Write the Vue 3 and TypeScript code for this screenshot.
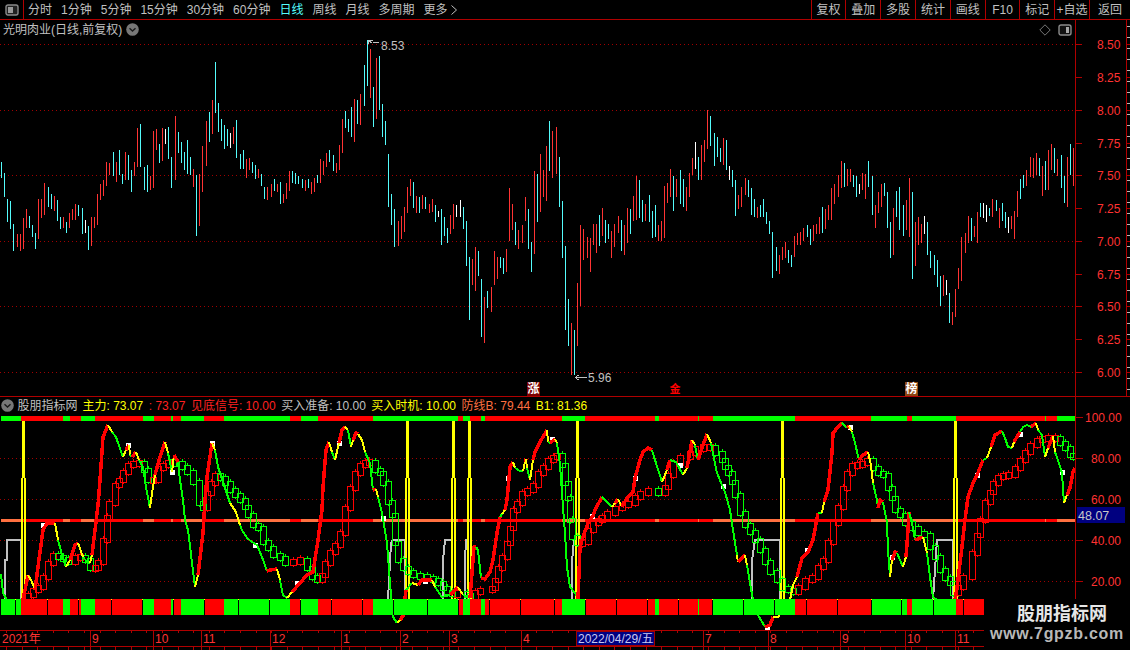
<script setup lang="ts">
type Seg = { c: string; pts: string }
const RED = '#ff3333', CYAN = '#54fcfc', WHITE = '#ffffff'

const candleSections: [number, number, string][] = [
  [0, 40, '5c366-414 13c399-471 22c477-546 31c483-567 40c552-633 52r582-621 61r582-633 70r534-627 79r507-564 88c528-564 97c555-591 106c579-627 115r477-597 124r477-534 133r429-525 145c441-501 154c462-507 163r468-513 172c480-543 181c531-567 190r531-564 199c546-579 208r519-564 217r507-540 226r492-540 235c495-528 247c504-582 256w540-579 265c558-630 274r531-618 283r531-564 292r462-555 301r432-480 310r420-468 319r366-438 328r369-405 340c336-408 349r366-426 358c330-405 367c402-432 376r336-420 385c345-420 394c390-456 403r366-408 412r264-381 421c252-381 433c381-450 442c375-456 451r408-450 460r273-444 469r267-330 478c312-369 487r264-363 496w267-312 505c261-357 514c351-444 526r228-420 535c276-339 544c306-369 553c336-390 562c300-402 571c351-405 580r387-441 589c405-588 598r402-558 607r318-456 619r243-378 628c216-306 637r180-282 646c66-219 655c189-276 664c237-303 673c255-327 682c267-318 691w279-324 700r261-312 709c240-354 721c342-387 730c330-387 739r357-414 748r354-390 757c366-399 766c375-417 775r387-414 784c402-438 793c441-477 802r441-480 814r432-471 823c417-453 832r432-456 841c426-492 850r462-489 859r429-477 868r393-453 877c393-429 886c399-432 895c408-432 907c417-444 916r420-453 925c417-444 934r426-462 943r414-456 952c405-429 961r357-429 970r363-405 979r339-381 988c330-366 999c345-393 1009r369-399 1018r315-390 1027r237-339 1036c213-264 1045c237-276 1054c201-291 1063r177-306 1072c180-252 1081r162-255 1093c75-198 1102c0-138 1111r27-174 1120c141-261 1129r54-237 1138c48-210 1147c192-291 1156c243-315 1165c342-501 1174c462-555 1183c507-621 1195r543-618'],
  [400, 100, '4r348-417 13r321-396 22r261-339 31r237-288 40c246-324 49r288-339 58c291-339 67r285-327 76c291-327 88r312-339 97r297-336 106c315-366 115w333-351 124c327-435 133c351-408 142c384-429 151r345-402 160r312-387 169w315-351 181w300-351 190c321-387 199c363-498 208c471-660 217r477-555 226r441-573 235c453-528 244c537-711 253r591-729 262c573-624 274r561-636 283r453-555 292r471-537 301c471-504 310c474-522 319r447-516 328r264-423 337r312-390 346c366-435 355r390-447 367r375-429 376r291-363 385c327-447 394c426-516 403r213-462 412c222-366 421r162-336 430r210-291 439r138-303 448c63-213 457r93-234 469r81-222 478c171-321 487c303-474 496c438-690 505c597-738 514r669-825 523c690-825 532r549-738 541r375-618 550r387-480 562r411-474 571r414-516 580r372-435 589r372-459 598c345-438 607r324-408 616c360-429 625c372-417 634r393-474 643r372-441 655r348-399 664c360-453 673r375-465 682r324-429 691c327-402 700r288-363 709r228-360 718c240-354 727c300-366 736r312-363 748c285-366 757c333-414 766c315-411 775r375-423 784r363-423 793r258-414 802r249-309 811r207-291 820c228-333 829r237-291 841c210-312 850c237-321 859r261-333 868r219-291 877r174-225 886w126-207 895c171-240 904r135-240 913r120-186 922r30-147 931c48-138 943c99-198 952c111-171 961c144-186 970r114-195 979c120-210 988w198-240 997c210-261 1006c240-348 1015r285-327 1024r261-321 1036r234-285 1045c240-291'],
  [750, 100, '4c264-345 13c297-351 22r321-354 31c315-351 40c297-351 49c336-372 58c363-402 67c396-534 79c441-513 88r465-522 97r441-480 106r426-474 115c450-489 124c465-501 133r408-471 142r399-435 151r396-435 160r384-423 172c375-411 181c387-435 190r375-423 199r372-402 208r351-402 217c321-399 226r327-387 235r315-360 244r264-360 253r252-312 265r225-291 274r183-264 283c189-261 292r207-258 301r207-246 310c225-261 319c228-291 328w252-282 337r219-270 346r222-297 355c183-261 367c228-345 376r315-384 385r276-339 394r252-321 403c249-288 412c276-384 421c366-474 430r324-465 439c273-351 448c261-390 460c315-408 469r300-390 478r234-411 487c276-537 496r366-498 505r351-435 514r372-429 523w348-402 532c366-465 541c453-504 553c465-525 562c480-561 571c528-618 580r525-588 589w540-585 598c579-669 607r636-675 616r567-651 625r504-567 634r411-543 646r399-459 655r348-429 664c354-423 673r378-411 682r336-429 691c309-351 700w309-354 709w315-366 718c324-348 727r297-351 739c300-333 748r324-384 757c309-363 766c336-384 775w351-399 784r348-387 793r333-417 802r273-351 811c237-297 820c225-264 829r210-258 841r171-231 850r174-234 859r159-225 868c174-228 877r198-288 886c183-270 895r150-270 904r132-210 913c144-219 922r177-228 934c165-264 943c228-309 952r171-321 961c132-225 970r144-258']
]

const paths: Record<string, string> = { r: '', c: '', w: '' }
for (const [x0, y0, s] of candleSections) {
  for (const t of s.split(' ')) {
    const m = /^(\d+)([rcw])(\d+)-(\d+)$/.exec(t)
    if (!m) continue
    const x = Math.floor(x0 + Number(m[1]) / 3) + 0.5
    paths[m[2]] += `M${x} ${y0 + Math.round(Number(m[3]) / 3)}V${y0 + Math.round(Number(m[4]) / 3)}`
  }
}
const candlePaths = [
  { d: paths.r, c: RED },
  { d: paths.c, c: CYAN },
  { d: paths.w, c: WHITE }
]

const priceAxis = [
  ['8.50', 44], ['8.25', 77], ['8.00', 110], ['7.75', 143], ['7.50', 175], ['7.25', 208],
  ['7.00', 241], ['6.75', 274], ['6.50', 306], ['6.25', 339], ['6.00', 372]
] as [string, number][]
const priceGrid = [44, 110, 175, 241, 306, 372]
const edgeTicks = Array.from({ length: 34 }, (_, i) => 26 + i * 11)
const indicatorAxis = [
  ['100.00', 417], ['80.00', 458], ['60.00', 499], ['40.00', 540], ['20.00', 581]
] as [string, number][]
const indicatorGrid = [458, 499, 540, 581]

/* green runs of the signal strips; everything between them is red */
const greens = [[1, 21], [63, 70], [81, 95], [143, 154], [171, 173], [181, 204], [224, 290], [301, 318], [373, 458], [463, 470], [481, 485], [562, 585], [655, 659], [698, 699], [713, 795], [871, 907], [912, 956], [1045, 1046], [1057, 1075]]
const runs: { x: number; w: number; g: boolean }[] = []
let cursor = 1
for (const [a, b] of greens) {
  if (a > cursor) runs.push({ x: cursor, w: a - cursor, g: false })
  runs.push({ x: a, w: b - a, g: true })
  cursor = b
}
const bottomRuns = runs.filter(r => r.x < 984).map(r => ({ ...r, w: Math.min(r.w, 984 - r.x) }))
const stripTicks = [15, 47, 78, 111, 142, 173, 204, 238, 269, 300, 331, 362, 393, 427, 458, 489, 520, 554, 585, 616, 647, 678, 712, 743, 774, 806, 837, 871, 901, 933, 963]

const signalBars = [23.5, 407, 453, 469.5, 577, 782, 955.5]
const greyLines = [
  '5,600 5,560 7,560 7,540 21,540 21,599',
  '388,600 391,543 393,540 405,540 405,599',
  '443,599 443,560 445,540 452,540 452,599',
  '465,599 465,560 466,540 468,540 468,599',
  '572,599 572,562 574,540 576,540 576,599',
  '752,599 752,560 755,540 780,540 780,599',
  '933,599 935,570 937,540 953,540 953,599'
]

const bandRaw = '28,595 33,590 38,587 43,577 48,563 53,555 58,557 63,559 68,562 75,557 80,557 85,560 90,568 95,568 98,562 103,540 107,517 109,503 115,485 119,480 123,472 128,465 133,463 139,463 144,470 148,480 153,480 158,468 163,465 168,462 173,463 182,467 187,472 193,482 199,503 203,508 207,493 211,483 215,475 220,478 225,483 230,490 235,495 240,500 245,507 248,515 253,525 258,528 263,542 268,548 273,555 280,558 285,563 293,561 300,560 307,568 312,577 317,580 322,575 325,563 330,552 335,545 340,533 345,508 350,488 355,473 360,465 365,462 369,462 375,470 380,473 383,483 388,502 392,515 395,543 398,560 403,568 408,572 413,575 420,577 427,578 433,580 438,583 443,588 447,592 452,594 457,593 467,595 470,597 475,592 480,590 492,588 495,580 498,568 502,557 507,543 510,528 513,510 517,503 522,493 527,490 533,485 538,473 543,467 548,460 553,457 557,455 562,465 565,483 568,498 570,520 572,537 577,543 582,542 588,530 593,523 598,520 602,517 607,513 615,508 622,505 628,503 635,497 640,493 648,490 658,493 665,487 668,475 673,463 680,457 690,453 695,448 703,447 710,447 715,453 722,460 725,467 728,473 732,482 735,495 740,513 745,525 750,532 755,540 760,550 765,562 770,572 777,580 782,588 788,590 793,592 798,587 805,580 812,577 818,567 823,560 828,542 833,523 838,507 843,488 847,473 852,465 857,465 862,463 867,460 873,468 878,473 883,475 888,488 892,498 895,510 900,515 905,523 912,528 918,533 924,535 930,547 935,557 940,570 945,578 950,583 953,593 958,587 963,577 972,553 977,535 980,520 985,502 990,492 993,483 998,477 1003,475 1008,475 1015,468 1020,460 1025,452 1030,445 1037,440 1042,438 1048,438 1055,438 1060,443 1065,448 1070,455 1073,457'
const bandPts = bandRaw.split(' ').map(p => p.split(',').map(Number))
const bandBoxes = bandPts.map(([x, y], i) => {
  const prev = i ? bandPts[i - 1][1] : y + 4
  let top = Math.min(prev, y) - 2
  let bottom = Math.max(prev, y) + 2
  if (bottom - top < 6) { top -= 1; bottom += 1 }
  return {
    x: Math.round(x - 3) + 0.5,
    y: top + 0.5,
    h: bottom - top,
    c: y <= prev ? '#ff0000' : '#00ff00',
    wx: Math.round(x) + 0.5,
    wt: top - 2,
    wb: bottom + 2
  }
})

const mainRaw = 'g1,574 g3,593 g7,600 g15,603 g22,604 r25,590 r28,575 y32,582 y35,590 r38,567 r43,530 r47,523 r55,523 y58,540 g63,558 g66,567 y70,560 r75,545 r78,543 y83,557 g87,562 g90,563 y92,555 r95,530 r98,505 r100,480 r103,437 r108,425 y112,432 g116,437 g123,457 y126,450 r129,445 y130,455 g132,457 r136,452 y139,460 g143,467 g146,487 g150,508 y153,487 y155,475 r160,457 r165,442 y168,453 g172,472 y174,455 r178,462 g180,480 g183,500 g185,520 g188,530 g195,587 y198,575 r203,533 r205,500 r207,477 r212,443 y215,450 g218,467 g223,482 g230,503 y236,512 y240,525 g242,530 g247,538 g252,542 g257,545 g262,557 g267,571 r270,570 r277,569 y280,580 g283,595 g287,598 y292,592 r300,583 r307,575 r313,572 r318,540 r322,510 r323,487 r326,450 r329,442 y332,452 g335,460 y339,443 r342,430 r345,427 y348,430 g351,447 y353,440 r356,433 r358,434 y362,440 y365,452 g370,463 g373,490 r376,489 y378,497 g382,513 g387,543 g390,583 g393,617 g397,623 y400,620 r403,616 r406,590 g412,583 y418,585 r422,580 r432,580 y435,587 g442,597 g450,595 r458,587 y463,595 g470,598 r474,547 r476,547 g478,550 g481,578 r485,579 r490,572 r493,560 r497,533 r500,517 g502,514 y505,510 r507,500 r510,467 r513,462 y515,468 g520,471 g523,471 y525,462 r526,459 y527,468 g530,480 y533,460 r535,452 r540,442 r547,430 y548,442 g550,443 r555,439 y557,443 g560,465 g563,507 g565,533 g567,567 g570,587 g575,593 g578,599 r580,547 r583,537 r588,523 r593,516 r595,510 r602,497 g607,502 g612,507 y615,503 r618,499 y622,507 r627,498 r633,492 r635,478 r640,460 r643,452 r648,448 r652,450 g655,460 g662,482 y667,470 r670,460 g676,462 g683,475 y687,468 r692,440 y695,445 g698,460 r702,448 r707,434 y711,443 g713,453 g717,473 g722,485 g725,492 g730,510 g733,530 g737,555 y738,562 r745,555 y747,565 g750,583 g753,600 g758,615 g765,627 r770,625 r773,617 y778,617 y790,600 y793,585 y797,577 r802,558 r808,552 r813,540 r818,513 g822,513 y824,502 r828,490 r832,453 r833,433 r838,427 r842,423 g847,428 r849,426 y852,432 g855,443 g859,460 r863,455 r868,452 y871,465 y873,483 g877,500 g878,508 r880,500 r883,502 g887,523 g888,550 g890,577 y892,560 r895,552 r897,553 g903,567 y906,557 r908,530 r909,512 g912,523 g915,540 r923,537 y927,553 g930,577 g933,597 g945,606 g952,615 y955,600 r957,588 r962,547 r965,520 r968,497 r973,483 r977,475 r983,460 g987,458 y991,447 r995,435 r1002,431 g1005,438 g1008,447 g1012,448 y1014,442 r1018,435 r1020,432 g1023,427 g1027,425 g1031,427 r1036,423 y1038,430 g1042,435 g1045,457 y1048,448 r1052,438 r1053,436 y1055,452 g1058,460 g1062,473 g1064,503 y1067,495 r1070,488 r1073,472 r1075,468'
const mainSegs: Seg[] = []
let last = ''
let lastKey = ''
for (const t of mainRaw.split(' ')) {
  const key = t[0]
  const p = t.slice(1)
  if (key !== lastKey) {
    mainSegs.push({ c: key, pts: last ? `${last} ${p}` : p })
    lastKey = key
  } else {
    mainSegs[mainSegs.length - 1].pts += ` ${p}`
  }
  last = p
}
const mainColor = (k: string) => (k === 'r' ? '#ff0000' : k === 'g' ? '#00ff00' : '#ffff00')
const mainWidth = (k: string) => (k === 'r' ? 3.5 : 2)

const whiteDots = [[43, 525], [128, 445], [172, 472], [212, 443], [255, 545], [297, 583], [339, 443], [383, 518], [425, 581], [508, 478], [552, 439], [592, 516], [635, 478], [680, 465], [723, 486], [767, 627], [807, 550], [850, 427], [892, 557], [977, 475], [1020, 434], [1062, 472]]

const timeMajors = [90, 153, 201, 270, 341, 400, 449, 521, 703, 768, 840, 905, 955]
const timeLabels = [
  ['2021年', 2], ['9', 92], ['10', 155], ['11', 203], ['12', 272], ['1', 343], ['2', 402],
  ['3', 451], ['4', 523], ['7', 705], ['8', 770], ['9', 842], ['10', 907], ['11', 957]
] as [string, number][]
const timeMinors = Array.from({ length: 66 }, (_, i) => 6 + i * 15.6).map(Math.round)

const periods = ['分时', '1分钟', '5分钟', '15分钟', '30分钟', '60分钟', '日线', '周线', '月线', '多周期']
const actions = ['复权', '叠加', '多股', '统计', '画线', 'F10', '标记', '+自选', '返回']
const legend = [
  { label: '主力', value: '73.07', c: 'yellow' },
  { label: '', value: '73.07', c: 'red' },
  { label: '见底信号', value: '10.00', c: 'red' },
  { label: '买入准备', value: '10.00', c: 'grey' },
  { label: '买入时机', value: '10.00', c: 'yellow' },
  { label: '防线B', value: '79.44', c: 'coral' },
  { label: 'B1', value: '81.36', c: 'yellow' }
]
</script>

<template>
  <div class="app">
    <header class="toolbar">
      <div class="layout-btn">
        <svg width="14" height="12" viewBox="0 0 14 12">
          <rect x="1" y="1" width="12" height="10" rx="2" fill="#222" stroke="#8a8a8a" stroke-width="1.4" />
          <rect x="3" y="3" width="5" height="6" fill="#9a9a9a" />
        </svg>
      </div>
      <nav class="periods">
        <span v-for="p in periods" :key="p" :class="{ active: p === '日线' }">{{ p }}</span>
        <span class="more">更多
          <svg width="8" height="12" viewBox="0 0 8 12"><path d="M1.5 1.5 6.5 6 1.5 10.5" fill="none" stroke="#c0c0c0" /></svg>
        </span>
      </nav>
      <div class="actions">
        <span v-for="a in actions" :key="a" class="action">{{ a }}</span>
      </div>
    </header>

    <section class="pane price">
      <div class="plot">
        <div class="pane-title">
          <span class="stock">光明肉业(日线,前复权)</span>
          <svg class="chev" width="13" height="13" viewBox="0 0 13 13">
            <circle cx="6.5" cy="6.5" r="6.3" fill="#777" />
            <path d="M3.5 5.2 6.5 8 9.5 5.2" fill="none" stroke="#1a1a1a" stroke-width="1.4" />
          </svg>
          <span class="spacer"></span>
          <svg width="12" height="12" viewBox="0 0 12 12"><path d="M6 .8 11.2 6 6 11.2 .8 6Z" fill="none" stroke="#777" /></svg>
          <svg class="panel-icon" width="14" height="12" viewBox="0 0 14 12">
            <rect x="1" y="1" width="12" height="10" rx="2" fill="#111" stroke="#8a8a8a" stroke-width="1.4" />
            <rect x="8" y="3" width="3" height="6" fill="#a8a8a8" />
          </svg>
        </div>
        <svg class="chart" viewBox="0 20 1075 376" width="1075" height="376">
          <path v-for="y in priceGrid" :key="y" :d="`M0 ${y + 0.5}H1075`" class="grid" />
          <path v-for="p in candlePaths" :key="p.c" :d="p.d" :stroke="p.c" fill="none" shape-rendering="crispEdges" />
          <path d="M368 40.5h5M368 40v4M368 40.5l4 2.5M373 42.5h6" fill="none" stroke="#c0c0c0" shape-rendering="crispEdges" />
          <text x="381" y="50" class="mark">8.53</text>
          <path d="M575.5 377.5H587M575.5 377.5l3-2.5M575.5 377.5l3 2.5" fill="none" stroke="#c0c0c0" shape-rendering="crispEdges" />
          <text x="588" y="382" class="mark">5.96</text>
          <rect x="527" y="382" width="13" height="14" fill="#7a0000" />
          <text x="533.5" y="393" class="tag">涨</text>
          <text x="675" y="393" class="tag tag-red">金</text>
          <rect x="905" y="382" width="13" height="14" fill="#8b4513" />
          <text x="911.5" y="393" class="tag">榜</text>
        </svg>
      </div>
      <svg class="axis" viewBox="1076 20 54 376" width="54" height="376">
        <g v-for="[t, y] in priceAxis" :key="t">
          <path :d="`M1076 ${y + 0.5}h6`" class="tick" />
          <path :d="`M1127 ${y + 0.5}h3`" class="tick" />
          <text x="1097" :y="y + 5" class="axis-label">{{ t }}</text>
        </g>
        <path d="M1126.5 20V396" class="tick" />
        <path v-for="y in edgeTicks" :key="y" :d="`M1127 ${y + 0.5}h3`" stroke="#bbb" shape-rendering="crispEdges" />
      </svg>
    </section>

    <section class="pane indicator">
      <div class="plot">
        <div class="legend">
          <svg class="chev first" width="13" height="13" viewBox="0 0 13 13">
            <circle cx="6.5" cy="6.5" r="6.3" fill="#777" />
            <path d="M3.5 5.2 6.5 8 9.5 5.2" fill="none" stroke="#1a1a1a" stroke-width="1.4" />
          </svg>
          <span class="legend-name">股朋指标网</span>
          <span v-for="(l, i) in legend" :key="i" :class="l.c">{{ l.label }}: {{ l.value }}</span>
        </div>
        <svg class="chart" viewBox="0 397 1075 233" width="1075" height="233">
          <path v-for="y in indicatorGrid" :key="y" :d="`M0 ${y + 0.5}H1075`" class="grid" />
          <rect v-for="r in runs" :key="'m' + r.x" :x="r.x" y="519" :width="r.w" height="3" :fill="r.g ? '#ff7040' : '#ff0000'" />
          <polyline v-for="g in greyLines" :key="g" :points="g" fill="none" stroke="#c0c0c0" stroke-width="2" shape-rendering="crispEdges" />
          <g v-for="x in signalBars" :key="x">
            <rect :x="Math.floor(x - 1)" y="421" width="3" height="57" fill="#ffff00" />
            <rect :x="Math.floor(x - 2)" y="478" width="2" height="121" fill="#ffff00" />
            <rect :x="Math.floor(x - 2) + 3" y="478" width="2" height="121" fill="#ffff00" />
          </g>
          <g v-for="b in bandBoxes" :key="b.wx + '-' + b.y" shape-rendering="crispEdges">
            <path :d="`M${b.wx} ${b.wt}V${b.y}M${b.wx} ${b.y + b.h}V${b.wb}`" :stroke="b.c" />
            <rect :x="b.x" :y="b.y" width="6" :height="b.h" fill="none" :stroke="b.c" />
          </g>
          <rect v-for="d in whiteDots" :key="d[0]" :x="d[0] - 2" :y="d[1] - 2" width="5" height="5" fill="#fff" />
          <polyline v-for="(s, i) in mainSegs" :key="i" :points="s.pts" fill="none" :stroke="mainColor(s.c)" :stroke-width="mainWidth(s.c)" stroke-linejoin="round" shape-rendering="crispEdges" />
          <rect v-for="r in runs" :key="'t' + r.x" :x="r.x" y="416" :width="r.w" height="5" :fill="r.g ? '#00ff00' : '#ff0000'" />
          <rect v-for="r in bottomRuns" :key="'b' + r.x" :x="r.x" y="599" :width="r.w" height="16" :fill="r.g ? '#00ff00' : '#ff0000'" />
          <g v-for="x in stripTicks" :key="x">
            <rect :x="x" y="599" width="1" height="16" fill="#000" />
            <rect :x="x" y="599" width="1" height="1" fill="#ffff00" />
          </g>
        </svg>
      </div>
      <svg class="axis" viewBox="1076 397 54 233" width="54" height="233">
        <g v-for="[t, y] in indicatorAxis" :key="t">
          <path :d="`M1076 ${y + 0.5}h7`" class="tick" />
          <text :x="t === '100.00' ? 1085 : 1091" :y="y + 5" class="axis-label">{{ t }}</text>
        </g>
        <rect x="1077" y="507" width="48" height="16" fill="#000080" />
        <text x="1078" y="520" class="last-value">48.07</text>
      </svg>
    </section>

    <footer class="timeline">
      <svg viewBox="0 630 1130 20" width="1130" height="20">
        <path d="M0 630.5H1075M0 646.5H1075" class="tick" />
        <path v-for="x in timeMinors" :key="x" :d="`M${x + 0.5} 630V633M${x + 0.5} 646V650`" class="tick" />
        <path v-for="x in timeMajors" :key="x" :d="`M${x + 0.5} 630V650`" class="tick" />
        <text v-for="[t, x] in timeLabels" :key="t + x" :x="x" y="643" class="time-label">{{ t }}</text>
        <rect x="576.5" y="631.5" width="78" height="14" fill="#000080" stroke="#a00000" />
        <text x="578" y="643" class="time-box">2022/04/29/五</text>
      </svg>
    </footer>

    <aside class="watermark">
      <div class="wm-title">股朋指标网</div>
      <div class="wm-url">www.7gpzb.com</div>
    </aside>
  </div>
</template>

<style>
html, body { margin: 0; background: #000; }
</style>

<style scoped>
.app {
  position: relative;
  width: 1130px;
  height: 650px;
  overflow: hidden;
  background: #000;
  color: #c0c0c0;
  font: 12px/1 "Liberation Sans", "Noto Sans CJK SC", sans-serif;
}
svg { display: block; }
.toolbar {
  display: flex;
  align-items: stretch;
  box-sizing: border-box;
  height: 20px;
  border-bottom: 1px solid #b00000;
}
.layout-btn {
  box-sizing: border-box;
  width: 24px;
  display: flex;
  align-items: center;
  justify-content: center;
  border-right: 1px solid #b00000;
}
.periods {
  display: flex;
  align-items: center;
  gap: 9px;
  padding-left: 4px;
  white-space: nowrap;
}
.periods .active { color: #54fcfc; }
.more { display: flex; align-items: center; gap: 2px; }
.actions { display: flex; margin-left: auto; }
.action {
  box-sizing: border-box;
  width: 34.8px;
  border-left: 1px solid #b00000;
  display: flex;
  align-items: center;
  justify-content: center;
  white-space: nowrap;
}
.action:last-child { width: 41px; }
.pane { display: flex; }
.price { height: 377px; border-bottom: 1px solid #b00000; box-sizing: border-box; }
.indicator { height: 233px; }
.plot { position: relative; width: 1075px; }
.axis { border-left: 1px solid #b00000; }
.pane-title {
  position: absolute;
  left: 3px;
  right: 3px;
  top: 3px;
  height: 13px;
  display: flex;
  align-items: center;
}
.stock { margin-right: 4px; }
.spacer { flex: 1; }
.panel-icon { margin-left: 7px; }
.legend {
  position: absolute;
  left: 1px;
  top: 2px;
  height: 13px;
  display: flex;
  align-items: center;
  gap: 5.5px;
  white-space: nowrap;
}
.legend-name { margin-left: -2px; margin-right: -0.5px; }
.yellow { color: #ffff00; }
.red { color: #ff2020; }
.grey { color: #c0c0c0; }
.coral { color: #ff7040; }
.grid { stroke: #a00000; stroke-width: 1; stroke-dasharray: 1 3; fill: none; shape-rendering: crispEdges; }
.tick { stroke: #b00000; stroke-width: 1; fill: none; shape-rendering: crispEdges; }
.mark { fill: #c0c0c0; font-size: 12px; }
.tag { fill: #fff; font-size: 12px; font-weight: 700; text-anchor: middle; }
.tag-red { fill: #ff0000; font-size: 11px; }
.axis-label { fill: #ff3232; font-size: 12px; }
.last-value { fill: #c8c8c8; font-size: 12.5px; }
.time-label { fill: #ff3232; font-size: 12px; }
.time-box { fill: #c8c8f0; font-size: 12px; }
.watermark {
  position: absolute;
  left: 984px;
  top: 599px;
  width: 146px;
  height: 51px;
  background: #000;
  display: flex;
  flex-direction: column;
  align-items: center;
}
.wm-title {
  margin-top: 6px;
  margin-left: 10px;
  font-size: 18px;
  line-height: 18px;
  font-weight: 700;
  color: #e6e6e6;
}
.wm-url {
  margin-top: 2px;
  font-size: 16px;
  line-height: 18px;
  font-weight: 700;
  letter-spacing: 0.7px;
  color: #b8b8b8;
  white-space: nowrap;
}
</style>
